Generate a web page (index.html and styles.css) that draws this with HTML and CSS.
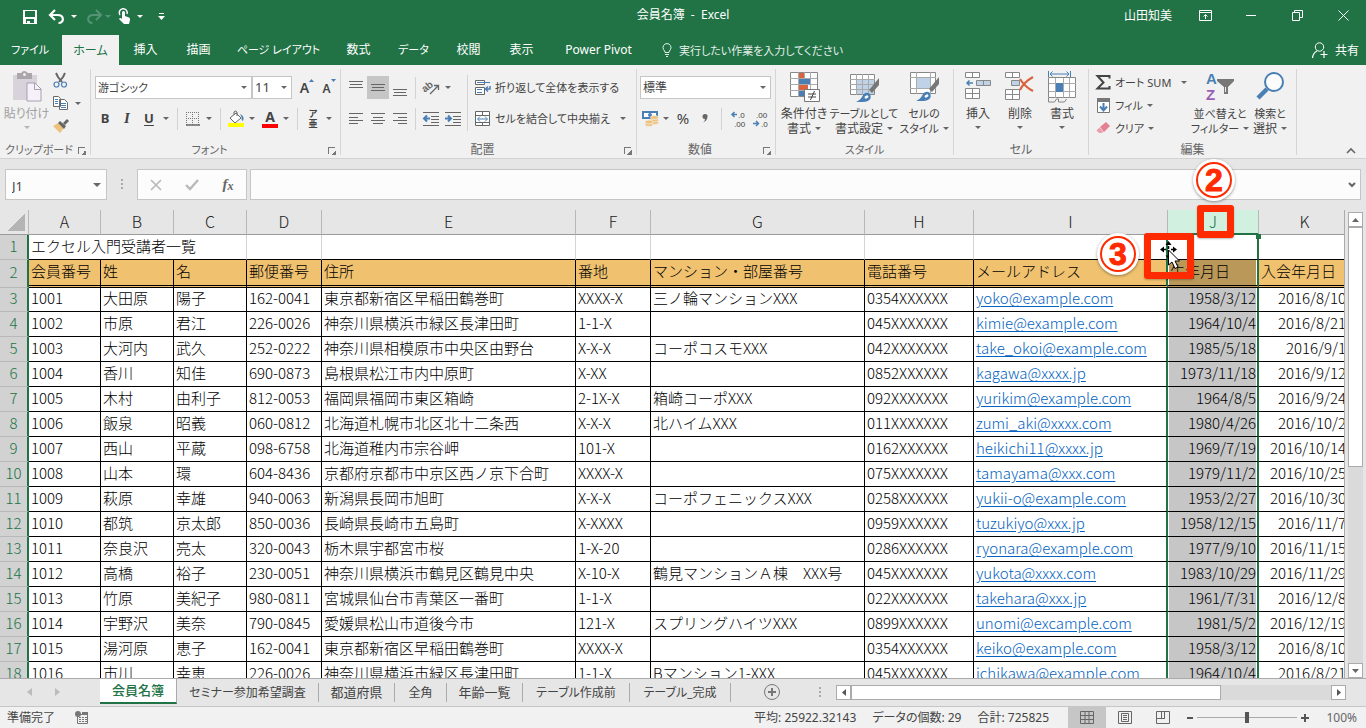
FILE: index.html
```html
<!DOCTYPE html>
<html lang="ja">
<head>
<meta charset="utf-8">
<meta name="viewport" content="width=device-width, initial-scale=1">
<title>会員名簿 - Excel</title>
<link rel="stylesheet" href="styles.css">
</head>
<body>
<div class="app">

<header class="titlebar">
  <div class="quick">
    <button class="qbtn save" aria-label="上書き保存"><svg width="14" height="14" viewBox="0 0 14 14"><path d="M0 0h14v14H0z" fill="#fff"/><path d="M2 1h10v6H2zM3 9h8v4H3z" fill="#217346"/><path d="M4 11h3v2H4z" fill="#fff"/></svg></button>
    <button class="qbtn undo" aria-label="元に戻す"><svg width="16" height="14" viewBox="0 0 16 14"><path d="M6 0L1 5l5 5M1.500 5h7c7 0 7 8 1 8" fill="none" stroke="#fff" stroke-width="2.200"/></svg></button>
    <button class="drop" aria-label="元に戻す一覧"><i class="caret light"></i></button>
    <button class="qbtn redo" aria-label="やり直し"><svg width="16" height="14" viewBox="0 0 16 14"><path d="M10 0l5 5-5 5M14.500 5h-7c-7 0-7 8-1 8" fill="none" stroke="#549474" stroke-width="2"/></svg></button>
    <button class="drop" aria-label="やり直し一覧"><i class="caret dim"></i></button>
    <button class="qbtn touch" aria-label="タッチ/マウス モードの切り替え"><svg width="14" height="17" viewBox="0 0 14 17"><path d="M2 7a4 4 0 1 1 7-1" fill="none" stroke="#fff" stroke-width="1.500"/><path d="M4 4q1.500-2 3 0v4l4 1.500q1.500.5 1 2.500l-1 4H6l-5-5q1-2 3 0z" fill="#fff"/></svg></button>
    <button class="drop" aria-label="タッチ一覧"><i class="caret light"></i></button>
    <button class="qbtn custom" aria-label="クイック アクセスのカスタマイズ"><svg width="7" height="8" viewBox="0 0 7 8"><path d="M1 0h5v1H1zM0 3h7L3.500 7z" fill="#fff"/></svg></button>
  </div>
  <h1 class="doc-title">会員名簿&nbsp; -&nbsp; Excel</h1>
  <div class="window-tools">
    <span class="user">山田知美</span>
    <button class="wbtn first" aria-label="リボンの表示オプション"><svg width="13" height="11" viewBox="0 0 13 11"><path d="M.5.5h12v10H.5zM0 2.500h13M6.500 9V5M4.500 6.500l2-2 2 2" fill="none" stroke="#fff"/></svg></button>
    <button class="wbtn" aria-label="最小化"><svg width="10" height="11" viewBox="0 0 10 11"><path d="M0 5.500h10" stroke="#fff"/></svg></button>
    <button class="wbtn" aria-label="元に戻す (縮小)"><svg width="11" height="11" viewBox="0 0 11 11"><path d="M.5 2.500h7v8h-7zM2.500 2.500v-2h8v7h-3" fill="none" stroke="#fff"/></svg></button>
    <button class="wbtn" aria-label="閉じる"><svg width="11" height="11" viewBox="0 0 11 11"><path d="M.5.5l10 10M10.500.5l-10 10" stroke="#fff"/></svg></button>
  </div>
</header>

<nav class="tabs">
  <button class="tab t-file kana">ファイル</button>
  <button class="tab t-home active">ホーム</button>
  <button class="tab t-std">挿入</button>
  <button class="tab t-std">描画</button>
  <button class="tab t-page kana">ページ レイアウト</button>
  <button class="tab t-std">数式</button>
  <button class="tab t-data kana">データ</button>
  <button class="tab t-std">校閲</button>
  <button class="tab t-std">表示</button>
  <button class="tab t-pivot">Power Pivot</button>
  <button class="tell kana"><svg width="10" height="14" viewBox="0 0 10 14"><path d="M3 9.500Q3 8 1.500 6.500a4 4 0 1 1 7 0Q7 8 7 9.500zM3 11.500h4M4 13.500h2" fill="none" stroke="#e4efe9"/></svg>実行したい作業を入力してください</button>
  <button class="share"><svg width="16" height="16" viewBox="0 0 16 16"><circle cx="7.500" cy="5" r="4.200" fill="none" stroke="#fff"/><path d="M.5 16q.5-5 4.500-7M12 9v7M8.500 12.500h7" fill="none" stroke="#fff" stroke-width="1.200"/></svg>共有</button>
</nav>

<section class="ribbon">
  <div class="group g-clip">
    <div class="body">
      <button class="big paste"><svg width="30" height="32" viewBox="0 0 30 32"><path d="M1 4h24v25H1z" fill="#d8d2da"/><path d="M5 2h4q3-4 7 0h4v6H5z" fill="#aaa6aa"/><circle cx="12.500" cy="3.500" r="1.500" fill="#f1f1f1"/><path d="M15 12h8l6 6v12H15z" fill="#f6f1f9" stroke="#a99fb2"/><path d="M22.500 12v6.500H29" fill="none" stroke="#a99fb2"/></svg><span>貼り付け</span><i class="caret faint"></i></button>
      <div class="clip-col">
        <button aria-label="切り取り"><svg width="15" height="16" viewBox="0 0 15 16"><path d="M3 1l2 4 4 5M12 1l-2 4-4 5" fill="none" stroke="#666" stroke-width="2"/><circle cx="3.500" cy="12.500" r="2.500" fill="none" stroke="#4a7fb5" stroke-width="1.200"/><circle cx="11" cy="12.500" r="2.500" fill="none" stroke="#4a7fb5" stroke-width="1.200"/></svg></button>
        <button aria-label="コピー"><svg width="15" height="14" viewBox="0 0 15 14"><path d="M.5.5h5l2 2v8h-7zM6.500 3.500h5l3 3v7h-8z" fill="#fff" stroke="#6a6a6a"/><path d="M2 3.500h3M2 5.500h3M2 7.500h3M8 7.500h5M8 9.500h5M8 11.500h5" stroke="#4a7fb5"/></svg><i class="caret"></i></button>
        <button aria-label="書式のコピー"><svg width="16" height="14" viewBox="0 0 16 14"><path d="M0 7l5-3 6 5-4 5z" fill="#eec27c"/><path d="M5 4l2-2 6 5-2 3z" fill="#666"/><path d="M10 4l4-4 2 2-4 4z" fill="#666"/></svg></button>
      </div>
    </div>
    <div class="caption kana">クリップボード</div><button class="launch" aria-label="クリップボードの設定"></button>
  </div>

  <div class="group g-font">
    <div class="body stack">
      <div class="row">
        <span class="combo c-font"><select class="kana" aria-label="フォント"><option>游ゴシック</option></select><i class="caret"></i></span>
        <span class="combo c-size"><select aria-label="フォント サイズ"><option>11</option></select><i class="caret"></i></span>
        <button class="ic grow" aria-label="フォント サイズの拡大"><b>A</b><svg width="5" height="3" viewBox="0 0 5 3"><path d="M0 3h5L2.500 0z" fill="#4a7fb5"/></svg></button>
        <button class="ic grow small" aria-label="フォント サイズの縮小"><b>A</b><svg width="5" height="3" viewBox="0 0 5 3"><path d="M0 0h5L2.500 3z" fill="#4a7fb5"/></svg></button>
      </div>
      <div class="row">
        <button class="ic fb">B</button><button class="ic fb it">I</button><button class="ic fb un">U</button><button class="dd" aria-label="下線"><i class="caret"></i></button>
        <i class="sep"></i>
        <button class="ic n" aria-label="罫線"><svg width="14" height="14" viewBox="0 0 14 14"><path d="M.5 0v13M6.500 0v13M12.500 0v13M0 .5h13M0 6.500h13" stroke="#777" stroke-dasharray="1 1"/><path d="M0 13h14" stroke="#666" stroke-width="1.500"/></svg></button><button class="dd" aria-label="罫線一覧"><i class="caret"></i></button>
        <i class="sep"></i>
        <button class="ic n" aria-label="塗りつぶしの色"><svg width="17" height="17" viewBox="0 0 17 17"><path d="M2 8l6-5 5 5-6 5z" fill="#fff" stroke="#666"/><path d="M6 5V2q1-2 3 0v4" fill="none" stroke="#666"/><path d="M12 4q5 2 3 7-2-1-1.500-4z" fill="#4a7fb5"/><path d="M0 13h16v4H0z" fill="#ff0"/></svg></button><button class="dd" aria-label="塗りつぶし一覧"><i class="caret"></i></button>
        <button class="ic n fc" aria-label="フォントの色"><b>A</b><i></i></button><button class="dd" aria-label="フォントの色一覧"><i class="caret"></i></button>
        <i class="sep"></i>
        <button class="ic n ruby" aria-label="ふりがな"><span>ア</span><span>亜</span></button><button class="dd" aria-label="ふりがな一覧"><i class="caret"></i></button>
      </div>
    </div>
    <div class="caption kana">フォント</div><button class="launch" aria-label="フォントの設定"></button>
  </div>

  <div class="group g-align">
    <div class="body">
      <div class="stack al">
        <div class="row">
          <button class="ic" aria-label="上揃え"><svg width="14" height="16" viewBox="0 0 14 16"><path d="M0 1.500h14M1 4.500h12M0 7.500h14" stroke="#666"/></svg></button>
          <button class="ic on" aria-label="上下中央揃え"><svg width="14" height="16" viewBox="0 0 14 16"><path d="M0 4.500h14M1 7.500h12M0 10.500h14" stroke="#666"/></svg></button>
          <button class="ic" aria-label="下揃え"><svg width="14" height="16" viewBox="0 0 14 16"><path d="M0 9.500h14M1 12.500h12M0 15.500h14" stroke="#666"/></svg></button>
          <i class="sep"></i>
          <button class="ic" aria-label="方向"><svg width="17" height="15" viewBox="0 0 17 15"><text x="0" y="10" font-size="10" font-weight="bold" fill="#666" transform="rotate(-38 5 9)">ab</text><path d="M7 14L15 6M11 5.500h4.500V10" fill="none" stroke="#666" stroke-width="1.300"/></svg></button><button class="dd" aria-label="方向一覧"><i class="caret"></i></button>
        </div>
        <div class="row">
          <button class="ic" aria-label="左揃え"><svg width="14" height="12" viewBox="0 0 14 12"><path d="M0 .5h14M0 4.500h9M0 7.500h14M0 10.500h9" stroke="#666"/></svg></button>
          <button class="ic" aria-label="中央揃え"><svg width="14" height="12" viewBox="0 0 14 12"><path d="M0 .5h14M2 4.500h10M0 7.500h14M2 10.500h10" stroke="#666"/></svg></button>
          <button class="ic" aria-label="右揃え"><svg width="14" height="12" viewBox="0 0 14 12"><path d="M0 .5h14M5 4.500h9M0 7.500h14M5 10.500h9" stroke="#666"/></svg></button>
          <i class="sep"></i>
          <button class="ic" aria-label="インデントを減らす"><svg width="16" height="14" viewBox="0 0 16 14"><path d="M0 .5h16M8 4.500h8M8 7.500h8M8 10.500h8M0 13.500h16" stroke="#666"/><path d="M7 6.500H2M4 3.500l-3 3 3 3" fill="none" stroke="#4a7fb5" stroke-width="2"/></svg></button>
          <button class="ic" aria-label="インデントを増やす"><svg width="16" height="14" viewBox="0 0 16 14"><path d="M0 .5h16M8 4.500h8M8 7.500h8M8 10.500h8M0 13.500h16" stroke="#666"/><path d="M0 6.500h5M3 3.500l3 3-3 3" fill="none" stroke="#4a7fb5" stroke-width="2"/></svg></button>
        </div>
      </div>
      <i class="sep tall"></i>
      <div class="stack wrapcol kana">
        <button class="line"><svg width="16" height="16" viewBox="0 0 16 16"><path d="M.5.5h9v4h-9zM.5 7.500h9v7h-9z" fill="#fff" stroke="#666"/><path d="M2 2.500h13M2 9.500h5M2 12.500h5" stroke="#4a7fb5"/><path d="M15 6v3h-4M13 6.500L10.500 9l2.500 2.500" fill="none" stroke="#4a7fb5" stroke-width="1.500"/></svg>折り返して全体を表示する</button>
        <button class="line"><svg width="16" height="16" viewBox="0 0 16 16"><path d="M.5.500h14v14H.5zM.5 4.500h14M.5 11.500h14M7.500 0v4M7.500 12v3" fill="#fff" stroke="#666"/><path d="M3 8h9M5 5.500L2.500 8 5 10.500M10 5.500L12.500 8 10 10.500" fill="none" stroke="#4a7fb5"/></svg>セルを結合して中央揃え<i class="caret far"></i></button>
      </div>
    </div>
    <div class="caption">配置</div><button class="launch" aria-label="配置の設定"></button>
  </div>

  <div class="group g-num">
    <div class="body stack">
      <div class="row"><span class="combo c-num"><select aria-label="表示形式"><option>標準</option></select><i class="caret"></i></span></div>
      <div class="row">
        <button class="ic n" aria-label="通貨表示形式"><svg width="17" height="17" viewBox="0 0 17 17"><path d="M0 1h16v8H0z" fill="#4a7fb5"/><path d="M2 3h12v4H2z" fill="#fff"/><circle cx="8" cy="5" r="2" fill="#4a7fb5"/><g fill="#eec27c" stroke="#f1f1f1" stroke-width=".7"><ellipse cx="12.500" cy="12.500" rx="4" ry="2"/><ellipse cx="12.500" cy="10" rx="4" ry="2"/><ellipse cx="12.500" cy="7.500" rx="4" ry="2"/><ellipse cx="7" cy="14.500" rx="4" ry="2"/><ellipse cx="7" cy="12" rx="4" ry="2"/></g></svg></button><button class="dd" aria-label="通貨一覧"><i class="caret"></i></button>
        <button class="ic pct">%</button><button class="ic" aria-label="桁区切り"><svg width="6" height="9" viewBox="0 0 6 9"><path d="M3 0q3 0 2.500 3Q5 7 1 8.500 3 7 3 5 .5 5 .5 2.500.5 0 3 0z" fill="#666"/></svg></button>
        <i class="sep"></i>
        <button class="ic dec" aria-label="小数点以下の表示桁数を増やす"><svg width="15" height="16" viewBox="0 0 15 16"><path d="M6 3.500H2M3.500 1L1 3.500 3.500 6" fill="none" stroke="#4a7fb5" stroke-width="1.500"/><text x="7" y="7">.0</text><text x="3" y="16">.00</text></svg></button>
        <button class="ic dec" aria-label="小数点以下の表示桁数を減らす"><svg width="15" height="16" viewBox="0 0 15 16"><path d="M0 12.500h5M3 10l2.500 2.500L3 15" fill="none" stroke="#4a7fb5" stroke-width="1.500"/><text x="3" y="7">.00</text><text x="8" y="16">.0</text></svg></button>
      </div>
    </div>
    <div class="caption">数値</div><button class="launch" aria-label="表示形式の設定"></button>
  </div>

  <div class="group g-style">
    <div class="body">
      <button class="big"><svg width="32" height="32" viewBox="0 0 32 32"><path d="M2.500 1.500h27v24h-27z" fill="#fff" stroke="#888"/><path d="M10.500 1v25M16.500 1v25M22.500 1v25M2 7.500h27M2 13.500h27M2 19.500h27" stroke="#aaa"/><path d="M11 2h5v5h-5zM11 14h9v5h-9z" fill="#d9623f"/><path d="M11 8h11v5H11zM11 20h5v5h-5z" fill="#4a7fb5"/><path d="M16.500 18.500h15v12h-15z" fill="#fff" stroke="#777"/><path d="M20 23h8M20 26h8M26.500 20l-4 9" stroke="#444"/></svg><span>条件付き</span><span>書式<i class="caret"></i></span></button>
      <button class="big wide kana"><svg width="32" height="32" viewBox="0 0 32 32"><path d="M2.500 3.500h24v20h-24z" fill="#fff" stroke="#888"/><path d="M9 9h17v14H9z" fill="#bfd2e8"/><path d="M8.500 3v21M14.500 3v21M20.500 3v21M2 8.500h25M2 13.500h25M2 18.500h25" stroke="#aaa"/><path d="M31 7v7l-7 8-3-3z" fill="#777"/><path d="M8 31q5-2 7-7 3-4 7-1 3 7-7 8z" fill="#4a7fb5"/><path d="M17 27l3-2" fill="none" stroke="#fff" stroke-width="2.500"/></svg><span>テーブルとして</span><span class="kanji">書式設定<i class="caret"></i></span></button>
      <button class="big"><svg width="32" height="32" viewBox="0 0 32 32"><path d="M2.500 1.500h25v21h-25z" fill="#fff" stroke="#888"/><path d="M8.500 1v22M22.500 1v22M2 6.500h26M2 17.500h26" stroke="#aaa"/><path d="M9 7h13v10H9z" fill="#bfd2e8"/><path d="M31 6v7l-7 8-3-3z" fill="#777"/><path d="M8 30q5-2 7-7 3-4 7-1 3 7-7 8z" fill="#4a7fb5"/><path d="M17 26l3-2" fill="none" stroke="#fff" stroke-width="2.500"/></svg><span class="kana">セルの</span><span class="kana">スタイル<i class="caret"></i></span></button>
    </div>
    <div class="caption kana">スタイル</div>
  </div>

  <div class="group g-cell">
    <div class="body">
      <button class="big"><svg width="28" height="32" viewBox="0 0 28 32"><path d="M1.500 1.500h14v5h-14zM8.500 1.500v5M1.500 17.500h14v10h-14zM8.500 17v11M1 22.500h15" fill="#fff" stroke="#888"/><path d="M12.500 9.500h14v5h-14zM19.500 9.500v5" fill="#bfd2e8" stroke="#888"/><path d="M9 12H3M5.500 9.500L3 12l2.500 2.500" fill="none" stroke="#4a7fb5" stroke-width="1.500"/></svg><span>挿入</span><i class="caret"></i></button>
      <button class="big"><svg width="30" height="32" viewBox="0 0 30 32"><path d="M.5 1.500h14v5H.5zM7.500 1.500v5M.5 18.500h14v10H.5zM7.500 18v11M0 23.500h15" fill="#fff" stroke="#888"/><path d="M6.500 9.500h8v5h-8z" fill="#bfd2e8" stroke="#888"/><path d="M15 8q5 8 13 12M28 6Q19 11 15 19" fill="none" stroke="#d9623f" stroke-width="2.200"/></svg><span>削除</span><i class="caret"></i></button>
      <button class="big"><svg width="30" height="32" viewBox="0 0 30 32"><path d="M1.500 6.500h27v20h-27z" fill="#fff" stroke="#888"/><path d="M8.500 7v20M16.500 7v20M22.500 7v20M2 12.500h27M2 20.500h27" stroke="#aaa"/><path d="M9 12h7v9H9z" fill="#4a7fb5"/><path d="M1.500 0v6M23.500 0v6M3 3h19M5.500.5L3 3l2.500 2.500M19.500.5L22 3l-2.500 2.500" fill="none" stroke="#4a7fb5"/><path d="M1.500 27v4h6l2-3h2v3h6l2-3" fill="none" stroke="#888"/></svg><span>書式</span><i class="caret"></i></button>
    </div>
    <div class="caption">セル</div>
  </div>

  <div class="group g-edit">
    <div class="body">
      <div class="edit-col kana">
        <button class="line"><svg width="15" height="15" viewBox="0 0 15 15"><path d="M13.500 3.500V1H1.500l6 6.500-6 6h12V11" fill="none" stroke="#444" stroke-width="2"/></svg>オート SUM<i class="caret far"></i></button>
        <button class="line"><svg width="15" height="15" viewBox="0 0 15 15"><path d="M1.500 1.500h12v13h-12z" fill="#fff" stroke="#777"/><path d="M1 0h13v4H1z" fill="#777"/><path d="M7.500 5v7M4 8.500l3.500 4 3.500-4" fill="none" stroke="#4a7fb5" stroke-width="2"/></svg>フィル<i class="caret"></i></button>
        <button class="line"><svg width="15" height="15" viewBox="0 0 15 15"><path d="M4 6l6-5 4 4-6 6z" fill="#e57f92"/><path d="M3.500 6.500l4 4.500-2.500 1H3L.5 9.500z" fill="#ec9dab"/></svg>クリア<i class="caret"></i></button>
      </div>
      <button class="big sort kana"><svg width="30" height="32" viewBox="0 0 30 32"><text x="1" y="13" font-size="15" font-weight="bold" fill="#4a7fb5">A</text><text x="1" y="29" font-size="15" font-weight="bold" fill="#9a5fb4">Z</text><path d="M12 8h17v2l-6 6v7h-4v-7l-7-6z" fill="#777"/><path d="M20 16h1v5h-1z" fill="#eee"/></svg><span>並べ替えと</span><span>フィルター<i class="caret"></i></span></button>
      <button class="big find"><svg width="30" height="32" viewBox="0 0 30 32"><path d="M3 27L12 18" stroke="#4a7fb5" stroke-width="4.500"/><circle cx="19" cy="11" r="9" fill="#fcfcfc" stroke="#4a7fb5" stroke-width="2"/></svg><span class="kana">検索と</span><span>選択<i class="caret"></i></span></button>
    </div>
    <div class="caption">編集</div>
  </div>
  <button class="collapse" aria-label="リボンを折りたたむ"><svg width="10" height="6" viewBox="0 0 10 6"><path d="M1 5l4-4 4 4" fill="none" stroke="#666" stroke-width="1.600"/></svg></button>
</section>

<section class="formula">
  <div class="namebox"><input aria-label="名前ボックス" value="J1"><i class="caret large"></i></div>
  <i class="dots"></i>
  <div class="fx">
    <button aria-label="キャンセル"><svg width="12" height="12" viewBox="0 0 12 12"><path d="M1 1l10 10M11 1L1 11" stroke="#b9b9b9" stroke-width="1.700"/></svg></button>
    <button aria-label="入力"><svg width="14" height="12" viewBox="0 0 14 12"><path d="M1 6l4 4 8-9" fill="none" stroke="#b9b9b9" stroke-width="2.400"/></svg></button>
    <button class="fn" aria-label="関数の挿入">f<small>x</small></button>
  </div>
  <div class="bar"><input aria-label="数式バー" value=""><svg width="8" height="6" viewBox="0 0 8 6"><path d="M1 1l3 3 3-3" fill="none" stroke="#666" stroke-width="2"/></svg></div>
</section>

<main class="work">
  <div class="sheet">
    <table>
      <colgroup><col class="w-n"><col class="w-a"><col class="w-b"><col class="w-b"><col class="w-d"><col class="w-e"><col class="w-d"><col class="w-g"><col class="w-h"><col class="w-i"><col class="w-j"><col class="w-k"></colgroup>
      <thead><tr><th class="corner" aria-label="すべて選択"></th><th>A</th><th>B</th><th>C</th><th>D</th><th>E</th><th>F</th><th>G</th><th>H</th><th>I</th><th class="sel">J</th><th>K</th></tr></thead>
      <tbody>
        <tr class="r1"><th>1</th><td colspan="3">エクセル入門受講者一覧</td><td></td><td></td><td></td><td></td><td></td><td></td><td></td><td></td></tr>
        <tr class="r2"><th>2</th><td>会員番号</td><td>姓</td><td>名</td><td>郵便番号</td><td>住所</td><td>番地</td><td>マンション・部屋番号</td><td>電話番号</td><td>メールアドレス</td><td>生年月日</td><td>入会年月日</td></tr>
        <tr><th>3</th><td>1001</td><td>大田原</td><td>陽子</td><td>162-0041</td><td>東京都新宿区早稲田鶴巻町</td><td>XXXX-X</td><td>三ノ輪マンションXXX</td><td>0354XXXXXX</td><td><a href="#">yoko@example.com</a></td><td>1958/3/12</td><td>2016/8/10</td></tr>
        <tr><th>4</th><td>1002</td><td>市原</td><td>君江</td><td>226-0026</td><td>神奈川県横浜市緑区長津田町</td><td>1-1-X</td><td></td><td>045XXXXXXX</td><td><a href="#">kimie@example.com</a></td><td>1964/10/4</td><td>2016/8/21</td></tr>
        <tr><th>5</th><td>1003</td><td>大河内</td><td>武久</td><td>252-0222</td><td>神奈川県相模原市中央区由野台</td><td>X-X-X</td><td>コーポコスモXXX</td><td>042XXXXXXX</td><td><a href="#">take_okoi@example.com</a></td><td>1985/5/18</td><td>2016/9/1</td></tr>
        <tr><th>6</th><td>1004</td><td>香川</td><td>知佳</td><td>690-0873</td><td>島根県松江市内中原町</td><td>X-XX</td><td></td><td>0852XXXXXX</td><td><a href="#">kagawa@xxxx.jp</a></td><td>1973/11/18</td><td>2016/9/12</td></tr>
        <tr><th>7</th><td>1005</td><td>木村</td><td>由利子</td><td>812-0053</td><td>福岡県福岡市東区箱崎</td><td>2-1X-X</td><td>箱崎コーポXXX</td><td>092XXXXXXX</td><td><a href="#">yurikim@example.com</a></td><td>1964/8/5</td><td>2016/9/24</td></tr>
        <tr><th>8</th><td>1006</td><td>飯泉</td><td>昭義</td><td>060-0812</td><td>北海道札幌市北区北十二条西</td><td>X-X-X</td><td>北ハイムXXX</td><td>011XXXXXXX</td><td><a href="#">zumi_aki@xxxx.com</a></td><td>1980/4/26</td><td>2016/10/2</td></tr>
        <tr><th>9</th><td>1007</td><td>西山</td><td>平蔵</td><td>098-6758</td><td>北海道稚内市宗谷岬</td><td>101-X</td><td></td><td>0162XXXXXX</td><td><a href="#">heikichi11@xxxx.jp</a></td><td>1969/7/19</td><td>2016/10/14</td></tr>
        <tr><th>10</th><td>1008</td><td>山本</td><td>環</td><td>604-8436</td><td>京都府京都市中京区西ノ京下合町</td><td>XXXX-X</td><td></td><td>075XXXXXXX</td><td><a href="#">tamayama@xxx.com</a></td><td>1979/11/2</td><td>2016/10/25</td></tr>
        <tr><th>11</th><td>1009</td><td>萩原</td><td>幸雄</td><td>940-0063</td><td>新潟県長岡市旭町</td><td>X-X-X</td><td>コーポフェニックスXXX</td><td>0258XXXXXX</td><td><a href="#">yukii-o@example.com</a></td><td>1953/2/27</td><td>2016/10/30</td></tr>
        <tr><th>12</th><td>1010</td><td>都筑</td><td>京太郎</td><td>850-0036</td><td>長崎県長崎市五島町</td><td>X-XXXX</td><td></td><td>0959XXXXXX</td><td><a href="#">tuzukiyo@xxx.jp</a></td><td>1958/12/15</td><td>2016/11/7</td></tr>
        <tr><th>13</th><td>1011</td><td>奈良沢</td><td>亮太</td><td>320-0043</td><td>栃木県宇都宮市桜</td><td>1-X-20</td><td></td><td>0286XXXXXX</td><td><a href="#">ryonara@example.com</a></td><td>1977/9/10</td><td>2016/11/15</td></tr>
        <tr><th>14</th><td>1012</td><td>高橋</td><td>裕子</td><td>230-0051</td><td>神奈川県横浜市鶴見区鶴見中央</td><td>X-10-X</td><td>鶴見マンションＡ棟　XXX号</td><td>045XXXXXXX</td><td><a href="#">yukota@xxxx.com</a></td><td>1983/10/29</td><td>2016/11/29</td></tr>
        <tr><th>15</th><td>1013</td><td>竹原</td><td>美紀子</td><td>980-0811</td><td>宮城県仙台市青葉区一番町</td><td>1-1-X</td><td></td><td>022XXXXXXX</td><td><a href="#">takehara@xxx.jp</a></td><td>1961/7/31</td><td>2016/12/8</td></tr>
        <tr><th>16</th><td>1014</td><td>宇野沢</td><td>美奈</td><td>790-0845</td><td>愛媛県松山市道後今市</td><td>121-X</td><td>スプリングハイツXXX</td><td>0899XXXXXX</td><td><a href="#">unomi@excample.com</a></td><td>1981/5/2</td><td>2016/12/19</td></tr>
        <tr><th>17</th><td>1015</td><td>湯河原</td><td>恵子</td><td>162-0041</td><td>東京都新宿区早稲田鶴巻町</td><td>XXXX-X</td><td></td><td>0354XXXXXX</td><td><a href="#">keiko@example.com</a></td><td>1958/3/12</td><td>2016/8/10</td></tr>
        <tr><th>18</th><td>1016</td><td>市川</td><td>幸恵</td><td>226-0026</td><td>神奈川県横浜市緑区長津田町</td><td>1-1-X</td><td>Bマンション1-XXX</td><td>045XXXXXXX</td><td><a href="#">ichikawa@example.com</a></td><td>1964/10/4</td><td>2016/8/21</td></tr>
      </tbody>
    </table>
  </div>
  <div class="vscroll">
    <button aria-label="上へ"><svg width="7" height="4" viewBox="0 0 7 4"><path d="M0 4h7L3.500 0z" fill="#666"/></svg></button>
    <div class="track"><div class="thumb"></div></div>
    <button aria-label="下へ"><svg width="7" height="4" viewBox="0 0 7 4"><path d="M0 0h7L3.500 4z" fill="#666"/></svg></button>
  </div>
</main>

<footer class="sheetbar">
  <div class="nav"><button aria-label="前のシート"><svg width="5" height="8" viewBox="0 0 5 8"><path d="M5 0v8L0 4z" fill="#bbb"/></svg></button><button aria-label="次のシート"><svg width="5" height="8" viewBox="0 0 5 8"><path d="M0 0v8l5-4z" fill="#bbb"/></svg></button></div>
  <button class="stab s1 active">会員名簿</button><button class="stab s2">セミナー参加希望調査</button><button class="stab s3">都道府県</button><button class="stab s4">全角</button><button class="stab s3">年齢一覧</button><button class="stab s6">テーブル作成前</button><button class="stab s7">テーブル_完成</button>
  <button class="add" aria-label="新しいシート"><svg width="18" height="18" viewBox="0 0 18 18"><circle cx="9" cy="9" r="7.500" fill="none" stroke="#777"/><path d="M9 5v8M5 9h8" stroke="#777" stroke-width="2"/></svg></button>
  <i class="dots gap"></i>
  <div class="hscroll">
    <button aria-label="左へ"><svg width="4" height="7" viewBox="0 0 4 7"><path d="M4 0v7L0 3.500z" fill="#555"/></svg></button>
    <div class="track"><div class="thumb"></div></div>
    <button aria-label="右へ"><svg width="4" height="7" viewBox="0 0 4 7"><path d="M0 0v7l4-3.500z" fill="#555"/></svg></button>
  </div>
</footer>

<footer class="status">
  <span class="ready">準備完了</span>
  <svg class="macro" width="13" height="13" viewBox="0 0 13 13"><path d="M2.500 3.500h10v9h-10z" fill="none" stroke="#777"/><path d="M7 1h6v3H7z" fill="#777"/><path d="M4 6.500h2M7 6.500h2M10 6.500h2M4 8.500h2M7 8.500h2M10 8.500h2M4 10.500h2M7 10.500h2M10 10.500h2" stroke="#777"/><circle cx="3" cy="3" r="3" fill="#777"/></svg>
  <div class="stats"><span>平均: 25922.32143</span><span>データの個数: 29</span><span>合計: 725825</span></div>
  <button class="view on" aria-label="標準"><svg width="14" height="13" viewBox="0 0 14 13"><path d="M.5.5h13v12H.5zM5 0v13M9 0v13M0 4.500h14M0 8.500h14" fill="none" stroke="#666"/></svg></button>
  <button class="view" aria-label="ページ レイアウト表示"><svg width="14" height="13" viewBox="0 0 14 13"><path d="M.5.5h13v12H.5zM3.500 2.500h7v8h-7zM5 4.500h4M5 6.500h4M5 8.500h4" fill="none" stroke="#666"/></svg></button>
  <button class="view" aria-label="改ページ プレビュー"><svg width="14" height="13" viewBox="0 0 14 13"><path d="M.5.5h13v12H.5zM5.500.5v7M8.500.5v7M0 7.500h9" fill="none" stroke="#666"/></svg></button>
  <button class="zoom" aria-label="縮小"><svg width="8" height="8" viewBox="0 0 8 8"><path d="M1 4h6" stroke="#555" stroke-width="2"/></svg></button>
  <input class="slider" type="range" aria-label="ズーム" min="10" max="190" value="100">
  <button class="zoom" aria-label="拡大"><svg width="8" height="8" viewBox="0 0 8 8"><path d="M0 4h8M4 0v8" stroke="#555" stroke-width="2"/></svg></button>
  <span class="percent">100%</span>
</footer>

<div class="handle"></div>
<div class="mark box-header"></div>
<div class="mark box-edge"></div>
<div class="badge step2"><span>2</span></div>
<div class="badge step3"><span>3</span></div>
<svg class="pointer" width="20" height="29" viewBox="0 0 20 29"><path d="M8.500 5v3M8.500 9v3M8.500 13v5M2 8.500h4M11 8.500h4" fill="none" stroke="#000" stroke-width="1.500"/><path d="M8.500 0l3 4h-6zM8.500 17.500l-3-3h3zM0 8.500l4-3v6zM17 8.500l-4-3v6z"/><path d="M8.500 9v15l3.500-3 3 6.500 3-1.500-3-6h4.500z" fill="#fff" stroke="#000"/></svg>
</div>
</body>
</html>
```
FILE: styles.css
```css
* { box-sizing: border-box; }
body { margin: 0; }
.app {
  position: relative;
  display: grid;
  grid-template-columns: minmax(0, 1fr);
  grid-template-rows: auto auto auto auto minmax(0, 1fr) auto auto;
  height: 100vh;
  overflow: hidden;
  background: #e6e6e6;
  color: #444;
  font: 12px/15px "Noto Sans", "Noto Sans CJK JP", sans-serif;
  font-feature-settings: "palt";
}
button { border: 0; padding: 0; margin: 0; background: none; font: inherit; font-feature-settings: inherit; color: inherit; white-space: nowrap; display: flex; align-items: center; justify-content: center; flex: none; }
svg { display: block; flex: none; overflow: visible; }
svg text { font-family: "Liberation Sans", sans-serif; }
input, select { font: inherit; font-feature-settings: inherit; color: inherit; border: 0; margin: 0; background: none; min-width: 0; }
i { font-style: normal; }
.kana { font-size: 11px; }
.kanji { font-size: 12px; }
.caret { flex: none; width: 0; height: 0; border: 3px solid transparent; border-top-color: #666; border-bottom: 0; }
.caret.light { border-top-color: #fff; }
.caret.dim { border-top-color: #549474; }
.caret.faint { border-top-color: #b5b5b5; }
.caret.large { border-width: 4px 4px 0; }

/* title bar */
.titlebar { display: grid; grid-template-columns: 1fr auto 1fr; align-items: start; height: 35px; background: #217346; color: #fff; }
.quick { display: flex; align-items: center; padding-left: 16px; height: 33px; }
.qbtn { height: 24px; }
.save { width: 27px; }
.undo { width: 28px; }
.redo { width: 22px; }
.touch { width: 20px; padding-right: 5px; }
.custom { width: 24px; }
.drop { width: 8px; height: 24px; margin-right: 4px; justify-content: flex-start; }
.doc-title { margin: 0; font-size: 12px; font-weight: 400; line-height: 30px; }
.window-tools { display: flex; align-items: center; justify-content: flex-end; height: 30px; }
.user { margin-right: 10px; }
.wbtn { width: 46px; height: 30px; }

/* ribbon tabs */
.tabs { display: flex; height: 30px; background: #217346; color: #fff; }
.tab { height: 29px; }
.t-file { width: 60px; margin-right: 2px; }
.t-home { width: 57px; }
.t-std { width: 53px; }
.t-page { width: 107px; }
.t-data { width: 57px; }
.t-pivot { width: 101px; }
.tab.active { height: 30px; background: #f1f1f1; color: #217346; }
.tell { margin-left: 13px; gap: 7px; color: #e4efe9; }
.share { margin-left: auto; margin-right: 7px; gap: 7px; }

/* ribbon */
.ribbon { display: flex; height: 94px; padding-top: 4px; background: #f1f1f1; border-bottom: 1px solid #d2d2d2; overflow: hidden; }
.group { flex: none; display: grid; grid-template-rows: 71px 16px; grid-template-columns: minmax(0, 1fr) auto; height: 86px; padding-top: 2px; border-right: 1px solid #d5d5d5; }
.g-clip { width: 91px; }
.g-font { width: 250px; }
.g-align { width: 296px; }
.g-num { width: 139px; }
.g-style { width: 178px; }
.g-cell { width: 135px; }
.g-edit { width: 208px; }
.body { grid-column: 1 / 3; display: flex; }
.caption { grid-column: 1; text-align: center; color: #666; line-height: 16px; white-space: nowrap; }
.launch { grid-column: 2; width: 8px; height: 8px; margin: 5px 4px 0 0; background: linear-gradient(#777, #777) 0 0 / 7px 1px no-repeat, linear-gradient(#777, #777) 0 0 / 1px 7px no-repeat, linear-gradient(135deg, transparent 50%, #777 50%) 3px 3px / 5px 5px no-repeat; }
.stack { display: flex; flex-direction: column; padding-top: 4px; gap: 6px; }
.row { display: flex; align-items: center; height: 25px; }
.sep { width: 1px; height: 22px; margin: 0 5px; background: #d2d2d2; flex: none; }
.ic { width: 22px; height: 23px; }
.ic.n { width: 20px; }
.dd { width: 12px; height: 23px; }
.on { background: #c6c6c6; }
.big { flex-direction: column; justify-content: flex-start; align-items: center; width: 60px; color: #444; }
.big svg { margin-bottom: 3px; }
.big span { display: flex; align-items: center; gap: 4px; line-height: 15px; }
.big > .caret { margin-top: 5px; }
.paste { width: 53px; color: #a0a0a0; }
.clip-col { display: flex; flex-direction: column; gap: 7px; padding-top: 1px; }
.clip-col button { height: 16px; gap: 7px; justify-content: flex-start; }
.g-font .body, .g-num .body { padding-left: 3px; }
.combo { display: flex; align-items: center; height: 23px; padding-right: 4px; background: #fff; border: 1px solid #c6c6c6; }
.combo select { appearance: none; flex: 1; padding: 0 2px; height: 21px; outline: 0; }
.c-font { width: 157px; margin-left: 1px; }
.c-size { width: 40px; margin-right: 4px; }
.c-size select { font-size: 13px; }
.c-num { width: 131px; }
.grow { align-items: flex-start; padding-top: 3px; gap: 0; }
.grow b { font-size: 14px; font-weight: 600; line-height: 18px; }
.grow.small b { font-size: 12px; line-height: 20px; }
.fb { font-size: 13px; font-weight: 700; }
.it { font-family: "Liberation Serif", serif; font-style: italic; font-size: 15px; }
.un { text-decoration: underline; text-underline-offset: 2px; }
.fc { flex-direction: column; margin-left: 2px; }
.fc b { font-size: 14px; line-height: 14px; }
.fc i { width: 16px; height: 4px; background: #f00; }
.ruby { flex-direction: column; font-size: 9px; line-height: 10px; font-weight: 700; }
.al { padding-left: 4px; }
.sep.tall { height: 56px; margin: 4px 7px 0 auto; }
.line { gap: 4px; height: 25px; justify-content: flex-start; }
.line .caret.far { margin-left: 6px; }
.al { width: 126px; }
.al .sep { margin: 0 4px; }
.wrapcol { width: 161px; }
.pct { font-size: 15px; }
.dec svg { fill: #444; font-size: 8px; }
.g-style .big { width: 56px; }
.g-style .big.wide { width: 64px; }
.g-cell .body { padding-left: 3px; }
.g-cell .big { width: 42px; }
.edit-col { display: flex; flex-direction: column; width: 102px; padding-left: 7px; }
.edit-col .line { height: 23px; }
.sort { width: 58px; }
.find { width: 42px; }
.collapse { margin: auto 10px 4px auto; }

/* formula bar */
.formula { display: flex; align-items: center; height: 51px; padding: 0 5px; }
.namebox, .fx, .bar { display: flex; align-items: center; height: 31px; background: #fcfcfc; border: 1px solid #c6c6c6; }
.namebox { width: 102px; padding: 0 5px; font-size: 13px; }
.namebox input { flex: 1; padding: 3px 1px 0; }
.dots { width: 2px; height: 11px; margin: 0 14px; background: repeating-linear-gradient(#aaa 0 2px, transparent 2px 4px); }
.fx { width: 110px; margin-right: 3px; }
.fx button { flex: 1; height: 29px; }
.fn { font: italic bold 15px "Liberation Serif", serif; color: #666; align-items: center; }
.fn small { font-size: 12px; padding-top: 3px; }
.bar { flex: 1; padding-right: 4px; }
.bar input { flex: 1; height: 29px; }

/* worksheet */
.work { display: flex; min-height: 0; }
.sheet { flex: 1; min-width: 0; overflow: hidden; border-right: 1px solid #ababab; font: 15px/20px "Noto Sans CJK JP", sans-serif; font-weight: 300; font-feature-settings: normal; color: #000; }
table { table-layout: fixed; border-collapse: separate; border-spacing: 0; width: 1351px; }
.w-n { width: 29px; }
.w-a { width: 72px; }
.w-b { width: 73px; }
.w-d { width: 75px; }
.w-e { width: 254px; }
.w-g { width: 214px; }
.w-h { width: 109px; }
.w-i { width: 194px; }
.w-j { width: 91px; }
.w-k { width: 92px; }
th, td { padding: 0 2px 2px; height: 25px; white-space: nowrap; overflow: hidden; font-weight: 300; }
thead th { border-right: 1px solid #b8b8b8; border-bottom: 1px solid #9b9b9b; font-size: 16px; line-height: 20px; color: #222; }
thead .sel { background: #d2f0e0; color: #217346; border-bottom: 2px solid #217346; }
.corner { background: linear-gradient(135deg, transparent 50%, #b4b4b4 50%) 8px 4px / 17px 17px no-repeat; }
tbody th { background: #d2d2d2; color: #217346; border-bottom: 1px solid #b8b8b8; border-right: 2px solid #217346; padding: 0 0 2px; }
td { background: #fff; border-right: 1px solid #000; border-bottom: 1px solid #000; }
td:nth-last-child(3), td:nth-last-child(2) { border-right: 2px solid #217346; }
td:nth-last-child(2) { background: #c6c6c6; text-align: right; padding-right: 1px; box-shadow: inset 1px 0 #fff, inset -1px 0 #fff; }
td:last-child { text-align: right; padding-right: 4px; }
.r1 td { border-right-color: #d4d4d4; }
.r1 td:nth-last-child(2) { background: #fff; }
.r1 td:nth-last-child(-n+3):not(:last-child) { border-right-color: #217346; }
.r2 th, .r2 td { height: 28px; padding-bottom: 4px; }
.r2 td { background: #f0c270; border-bottom: 3px double #000; }
.r2 td:nth-last-child(-n+2) { text-align: left; }
.r2 td:nth-last-child(2) { background: #b99859; }
tbody tr:nth-child(3) > * { height: 24px; padding-bottom: 3px; }
a { color: #0563c1; text-decoration: underline; text-underline-offset: 2px; }
.vscroll { display: flex; flex-direction: column; width: 21px; padding: 2px 3px 0; }
.vscroll button, .hscroll button { width: 15px; height: 15px; background: #fff; border: 1px solid #ababab; }
.track { flex: 1; background: #dadada; }
.thumb { background: #fff; border: 1px solid #ababab; }
.vscroll .thumb { height: 55%; margin-top: 0; }

/* sheet tabs */
.sheetbar { display: flex; height: 28px; border-top: 1px solid #ababab; }
.nav { display: flex; align-items: center; justify-content: center; gap: 23px; width: 100px; padding: 0 14px 2px 0; }
.stab { height: 19px; margin-top: 4px; border-right: 1px solid #ababab; }
.stab.active { height: 25px; margin-top: 0; background: #fff; color: #217346; font-weight: 500; border-bottom: 2px solid #217346; }
.s1 { width: 77px; font-size: 13px; }
.s2 { width: 142px; }
.s3 { width: 76px; font-size: 13px; }
.s4 { width: 52px; }
.s6 { width: 107px; }
.s7 { width: 101px; }
.add { width: 82px; height: 26px; }
.dots.gap { align-self: center; margin: 0 15px 0 auto; }
.hscroll { display: flex; align-items: center; flex: 0 1 510px; height: 26px; margin-right: 20px; }
.hscroll .track, .hscroll .thumb { height: 15px; }
.hscroll .thumb { width: 77%; }

/* status bar */
.status { display: flex; align-items: center; height: 22px; padding-left: 7px; background: #f1f1f1; border-top: 1px solid #c6c6c6; }
.macro { margin-left: 20px; }
.stats { display: flex; gap: 16px; margin-left: auto; margin-right: 19px; }
.view { width: 38px; height: 21px; }
.zoom { width: 12px; height: 20px; }
.view + .zoom { margin-left: 2px; }
.slider { appearance: none; width: 100px; height: 12px; margin: 0 2px 0 1px; background: linear-gradient(#aaa, #aaa) center / 100% 1px no-repeat; }
.slider::-webkit-slider-thumb { appearance: none; width: 4px; height: 11px; background: #555; }
.percent { width: 55px; padding-right: 9px; text-align: right; color: #666; }

/* callouts over the sheet */
.handle { position: absolute; left: 1256px; top: 234px; width: 5px; height: 5px; background: #217346; }
.mark { position: absolute; border: 7px solid #ff2a00; border-radius: 3px; box-shadow: 0 1px 2px #0004; }
.box-header { left: 1197px; top: 205px; width: 37px; height: 33px; }
.box-edge { left: 1144px; top: 233px; width: 50px; height: 46px; }
.badge { position: absolute; display: flex; width: 42px; height: 42px; padding: 3px; border-radius: 50%; background: #fff; box-shadow: 0 1px 3px #0006; }
.badge span { flex: 1; border: 2px solid #ff2a00; border-radius: 50%; color: #ff2a00; text-align: center; font: 700 32px/33px "Liberation Sans", sans-serif; -webkit-text-stroke: 1px #ff2a00; }
.step2 { left: 1193px; top: 159px; }
.step3 { left: 1097px; top: 233px; }
.pointer { position: absolute; left: 1160px; top: 241px; }
```
